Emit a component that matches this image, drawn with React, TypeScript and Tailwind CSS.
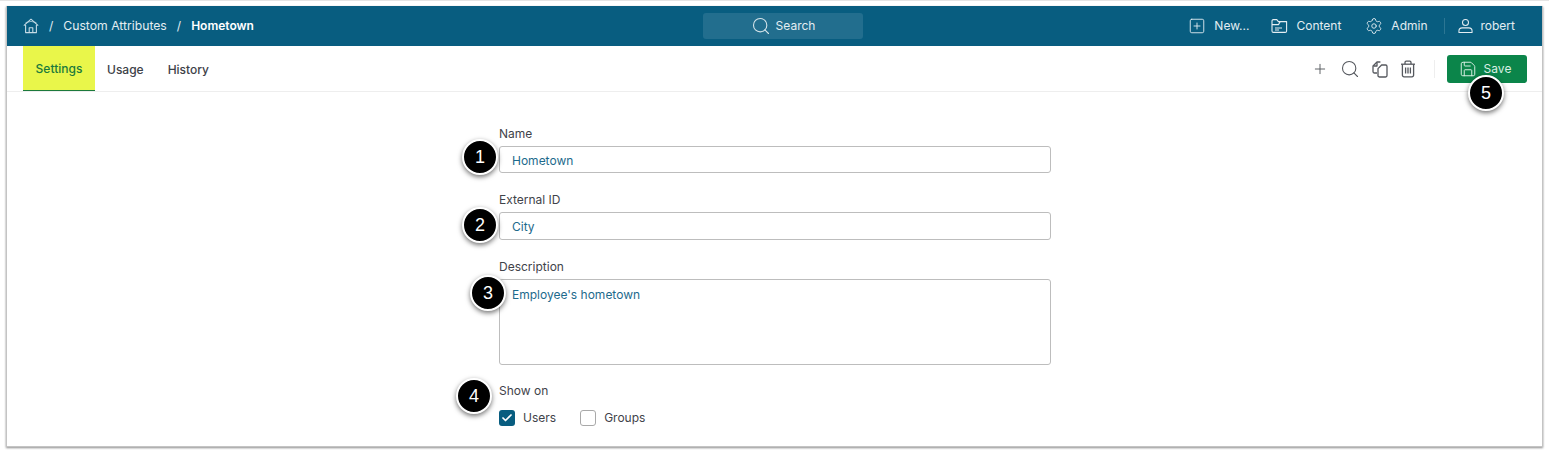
import { Search, SquarePlus, Settings, Plus, Save, Check } from "lucide-react";

function Badge({ n, className }: { n: number; className: string }) {
  return (
    <div
      className={`absolute w-[36px] h-[36px] rounded-full bg-black border-[2px] border-white text-white text-[18px] flex items-center justify-center shadow-[0_2px_5px_rgba(0,0,0,0.55)] font-['Liberation_Sans',sans-serif] ${className}`}
    >
      {n}
    </div>
  );
}

function HomeIcon() {
  return (
    <svg viewBox="0 0 16 16" className="w-[16px] h-[16px] text-[#c5dbe5]" fill="none" stroke="currentColor" strokeWidth="1.1" strokeLinejoin="round">
      <path d="M0.8 7.6 8 1.2l7.2 6.4" />
      <path d="M2.6 4.6 8 3.4l5.4 1.2" strokeWidth="0.7" />
      <path d="M2.6 7v7.6h10.8V7" />
      <path d="M6.2 14.6V9.8h3.6v4.8" />
    </svg>
  );
}

function FolderIcon() {
  return (
    <svg viewBox="0 0 17 16" className="w-[17px] h-[16px]" fill="none" stroke="currentColor" strokeWidth="1.1" strokeLinejoin="round">
      <path d="M1 3a1.4 1.4 0 0 1 1.4-1.4h3.4l1.6 2h8.2V13a1.4 1.4 0 0 1-1.4 1.4H2.4A1.4 1.4 0 0 1 1 13z" />
      <path d="M1 6.6h6.6l1.6-3" />
      <path d="M4 10h7M4 12h4" />
    </svg>
  );
}

function UserIcon() {
  return (
    <svg viewBox="0 0 16 16" className="w-[15px] h-[16px]" fill="none" stroke="currentColor" strokeWidth="1.1">
      <circle cx="8" cy="4.2" r="3.2" />
      <path d="M1 15v-1.6A3.4 3.4 0 0 1 4.4 10h7.2a3.4 3.4 0 0 1 3.4 3.4V15z" strokeLinejoin="round" />
    </svg>
  );
}

function CopyIcon() {
  return (
    <svg viewBox="0 0 18 18" className="w-[18px] h-[18px]" fill="none" stroke="currentColor" strokeWidth="1.3" strokeLinejoin="round">
      <path d="M6 13H3.4A1.4 1.4 0 0 1 2 11.6V6l4-4h3.4" />
      <path d="M6 2.4V6H2.4" />
      <path d="M7 16V8.6L10.6 5h4A1.4 1.4 0 0 1 16 6.4v9.2a1.4 1.4 0 0 1-1.4 1.4H8.4A1.4 1.4 0 0 1 7 15.6z" />
    </svg>
  );
}

function TrashIcon() {
  return (
    <svg viewBox="0 0 16 18" className="w-[16px] h-[18px]" fill="none" stroke="currentColor" strokeWidth="1.3" strokeLinejoin="round">
      <path d="M1 4.2h14" />
      <path d="M5 4V2.4A1.2 1.2 0 0 1 6.2 1.2h3.6A1.2 1.2 0 0 1 11 2.4V4" />
      <path d="M2.4 4.2v11a1.6 1.6 0 0 0 1.6 1.6h8a1.6 1.6 0 0 0 1.6-1.6v-11" />
      <path d="M5.6 7.4v6M8 7.4v6M10.4 7.4v6" />
    </svg>
  );
}

function NavItem({ icon, label }: { icon: React.ReactNode; label: string }) {
  return (
    <div className="flex items-center gap-[8px]">
      {icon}
      <span>{label}</span>
    </div>
  );
}

export default function App() {
  return (
    <div className="w-[1549px] h-[450px] bg-white font-['Inter',sans-serif] text-[12px] overflow-hidden">
      <div className="h-[1px] bg-[#e4e4e4]" />
      <div className="relative ml-[6px] mr-[6px] mt-[5px] h-[441px] bg-white border-l border-r border-b border-[#c4c4c4] shadow-[0_1px_2px_rgba(0,0,0,0.45)]">
        {/* Top bar */}
        <header className="h-[40px] bg-[#085d80] text-[#e3edf2] flex items-center pl-[16px] pr-[27px] relative">
          <div className="flex items-center flex-1">
            <HomeIcon />
            <span className="ml-[10px]">/</span>
            <span className="ml-[10px] text-[12.2px]">Custom Attributes</span>
            <span className="ml-[10px]">/</span>
            <span className="ml-[10px] font-semibold text-white">Hometown</span>
          </div>
          <div className="absolute left-[696px] top-[7px] w-[160px] h-[26px] bg-[#226e8e] rounded-[3px] flex items-center justify-center gap-[5px]">
            <Search className="w-[20px] h-[20px] text-[#d5e4ea]" strokeWidth={1.3} />
            <span>Search</span>
          </div>
          <div className="flex items-center">
            <NavItem icon={<SquarePlus className="w-[18px] h-[18px]" strokeWidth={1.2} />} label="New..." />
            <div className="ml-[22px]">
              <NavItem icon={<FolderIcon />} label="Content" />
            </div>
            <div className="ml-[24px]">
              <NavItem icon={<Settings className="w-[18px] h-[18px]" strokeWidth={1.2} />} label="Admin" />
            </div>
            <div className="ml-[16px] w-px h-[16px] bg-[#2c7693]" />
            <div className="ml-[13px]">
              <NavItem icon={<UserIcon />} label="robert" />
            </div>
          </div>
        </header>

        {/* Tabs and toolbar */}
        <div className="h-[46px] border-b border-[#eeeeee] flex items-stretch pl-[16px] pr-[15px] text-[#3d4148]">
          <div className="flex items-stretch flex-1 font-medium">
            <div className="w-[72px] pt-[2px] bg-[#e9f64a] border-b-[1px] border-[#1c7a3c] text-[#1c7a3c] flex items-center justify-center">Settings</div>
            <div className="ml-[12px] pt-[2px] flex items-center">Usage</div>
            <div className="ml-[24px] pt-[2px] flex items-center">History</div>
          </div>
          <div className="flex items-center text-[#55585e]">
            <Plus className="w-[16px] h-[16px] -translate-x-px" strokeWidth={1.4} />
            <Search className="ml-[11px] w-[20px] h-[20px]" strokeWidth={1.3} />
            <div className="ml-[11px]">
              <CopyIcon />
            </div>
            <div className="ml-[11px]">
              <TrashIcon />
            </div>
            <div className="ml-[18px] w-px h-[18px] bg-[#eeeeee]" />
            <button className="ml-[12px] w-[80px] h-[28px] bg-[#0b854a] rounded-[3px] text-[#d9efe3] flex items-center justify-center gap-[7px] pr-[4px]">
              <Save className="w-[18px] h-[18px]" strokeWidth={1.3} />
              <span>Save</span>
            </button>
          </div>
        </div>

        {/* Form */}
        <div className="w-[552px] ml-[492px] text-[#3f434a]">
          <div className="mt-[34px] leading-[15px]">Name</div>
          <div className="mt-[5px] h-[27px] border border-[#bdbdbd] rounded-[3px] pl-[12px] pt-[2px] flex items-center text-[#1d6a8c]">Hometown</div>
          <div className="mt-[19px] leading-[15px]">External ID</div>
          <div className="mt-[5px] h-[28px] border border-[#bdbdbd] rounded-[3px] pl-[12px] pt-[2px] flex items-center text-[#1d6a8c]">City</div>
          <div className="mt-[19px] leading-[15px]">Description</div>
          <div className="mt-[5px] h-[86px] border border-[#bdbdbd] rounded-[3px] pl-[12px] pt-[7px] leading-[15px] text-[#1d6a8c]">Employee's hometown</div>
          <div className="mt-[18px] leading-[15px]">Show on</div>
          <div className="mt-[11px] flex items-center">
            <div className="w-[16px] h-[16px] rounded-[3px] bg-[#085d80] flex items-center justify-center">
              <Check className="w-[12px] h-[12px] text-white" strokeWidth={3.5} />
            </div>
            <span className="ml-[8px]">Users</span>
            <div className="ml-[24px] w-[16px] h-[16px] rounded-[3px] border border-[#a9a9a9]" />
            <span className="ml-[8px]">Groups</span>
          </div>
        </div>

        <Badge n={1} className="left-[455px] top-[133px]" />
        <Badge n={2} className="left-[455px] top-[201px]" />
        <Badge n={3} className="left-[463px] top-[269px]" />
        <Badge n={4} className="left-[449px] top-[372px]" />
        <Badge n={5} className="left-[1461px] top-[69px]" />
      </div>
    </div>
  );
}
